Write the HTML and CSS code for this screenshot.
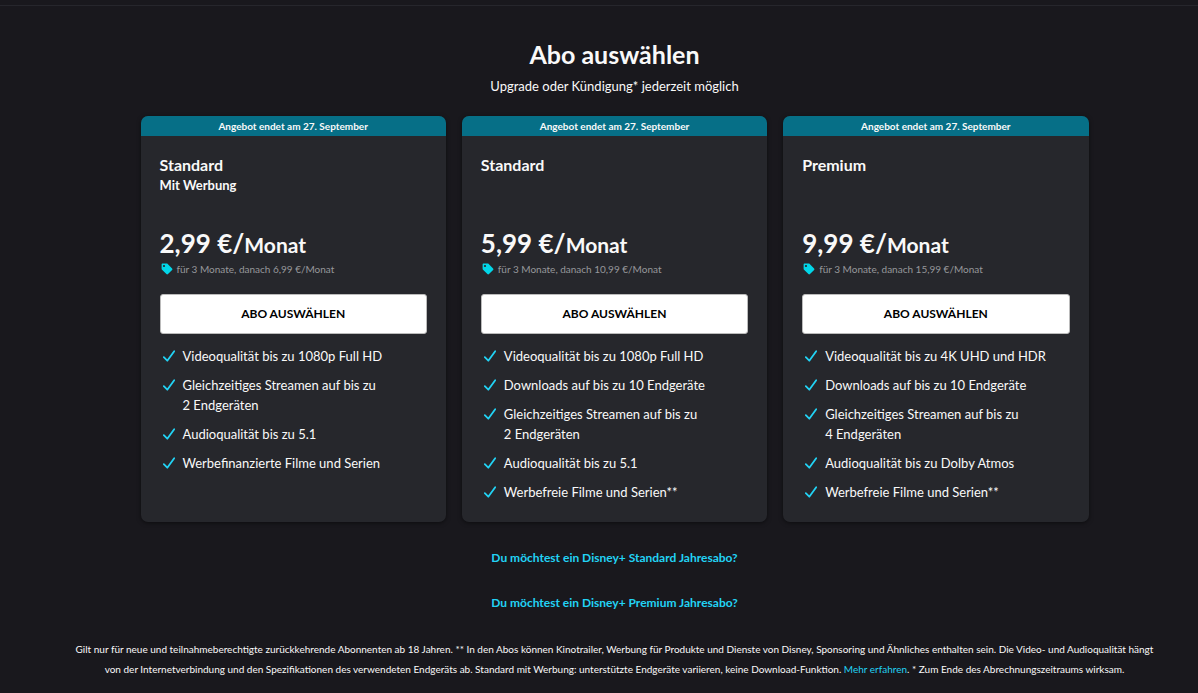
FILE: index.html
```html
<!DOCTYPE html>
<html lang="de">
<head>
    <meta charset="UTF-8">
    <meta name="viewport" content="width=device-width, initial-scale=1.0">
    <title>Abo auswählen</title>
    <link rel="stylesheet" href="styles.css">
</head>
<body>
    <svg class="sprite" aria-hidden="true">
        <symbol id="check" viewBox="0 0 12 12">
            <path d="M0.8 7.2 L4.3 10.7 L11.2 1.2" fill="none" stroke="currentColor" stroke-width="1.8" stroke-linecap="round" stroke-linejoin="round"/>
        </symbol>
        <symbol id="tag" viewBox="0 0 12 12">
            <path fill="currentColor" fill-rule="evenodd" d="M1.4 0.5h4.3c.4 0 .7.1 1 .4l4.4 4.5c.5.5.5 1.1 0 1.6L7 11.1c-.5.5-1.1.5-1.6 0L1 6.7c-.3-.3-.4-.6-.4-1V1.4c0-.5.4-.9.8-.9zM3 1.9a1.1 1.1 0 1 0 0 2.2 1.1 1.1 0 0 0 0-2.2z"/>
        </symbol>
    </svg>

    <main>
        <header>
            <h1>Abo auswählen</h1>
            <p>Upgrade oder Kündigung* jederzeit möglich</p>
        </header>

        <section class="plans">
            <article class="plan">
                <p class="banner">Angebot endet am 27. September</p>
                <div class="plan-body">
                    <div class="plan-name">
                        <h2>Standard</h2>
                        <h3>Mit Werbung</h3>
                    </div>
                    <p class="price">2,99 €/<span>Monat</span></p>
                    <p class="note"><svg class="tag"><use href="#tag"/></svg>für 3 Monate, danach 6,99 €/Monat</p>
                    <button type="button">ABO AUSWÄHLEN</button>
                    <ul>
                        <li><svg class="check"><use href="#check"/></svg>Videoqualität bis zu 1080p Full HD</li>
                        <li><svg class="check"><use href="#check"/></svg>Gleichzeitiges Streamen auf bis zu<br>2 Endgeräten</li>
                        <li><svg class="check"><use href="#check"/></svg>Audioqualität bis zu 5.1</li>
                        <li><svg class="check"><use href="#check"/></svg>Werbefinanzierte Filme und Serien</li>
                    </ul>
                </div>
            </article>

            <article class="plan">
                <p class="banner">Angebot endet am 27. September</p>
                <div class="plan-body">
                    <div class="plan-name">
                        <h2>Standard</h2>
                    </div>
                    <p class="price">5,99 €/<span>Monat</span></p>
                    <p class="note"><svg class="tag"><use href="#tag"/></svg>für 3 Monate, danach 10,99 €/Monat</p>
                    <button type="button">ABO AUSWÄHLEN</button>
                    <ul>
                        <li><svg class="check"><use href="#check"/></svg>Videoqualität bis zu 1080p Full HD</li>
                        <li><svg class="check"><use href="#check"/></svg>Downloads auf bis zu 10 Endgeräte</li>
                        <li><svg class="check"><use href="#check"/></svg>Gleichzeitiges Streamen auf bis zu<br>2 Endgeräten</li>
                        <li><svg class="check"><use href="#check"/></svg>Audioqualität bis zu 5.1</li>
                        <li><svg class="check"><use href="#check"/></svg>Werbefreie Filme und Serien**</li>
                    </ul>
                </div>
            </article>

            <article class="plan">
                <p class="banner">Angebot endet am 27. September</p>
                <div class="plan-body">
                    <div class="plan-name">
                        <h2>Premium</h2>
                    </div>
                    <p class="price">9,99 €/<span>Monat</span></p>
                    <p class="note"><svg class="tag"><use href="#tag"/></svg>für 3 Monate, danach 15,99 €/Monat</p>
                    <button type="button">ABO AUSWÄHLEN</button>
                    <ul>
                        <li><svg class="check"><use href="#check"/></svg>Videoqualität bis zu 4K UHD und HDR</li>
                        <li><svg class="check"><use href="#check"/></svg>Downloads auf bis zu 10 Endgeräte</li>
                        <li><svg class="check"><use href="#check"/></svg>Gleichzeitiges Streamen auf bis zu<br>4 Endgeräten</li>
                        <li><svg class="check"><use href="#check"/></svg>Audioqualität bis zu Dolby Atmos</li>
                        <li><svg class="check"><use href="#check"/></svg>Werbefreie Filme und Serien**</li>
                    </ul>
                </div>
            </article>
        </section>

        <nav class="yearly">
            <a href="#">Du möchtest ein Disney+ Standard Jahresabo?</a>
            <a href="#">Du möchtest ein Disney+ Premium Jahresabo?</a>
        </nav>

        <footer>
            <p>Gilt nur für neue und teilnahmeberechtigte zurückkehrende Abonnenten ab 18 Jahren. ** In den Abos können Kinotrailer, Werbung für Produkte und Dienste von Disney, Sponsoring und Ähnliches enthalten sein. Die Video- und Audioqualität hängt<br>von der Internetverbindung und den Spezifikationen des verwendeten Endgeräts ab. Standard mit Werbung: unterstützte Endgeräte variieren, keine Download-Funktion. <a href="#">Mehr erfahren</a>. * Zum Ende des Abrechnungszeitraums wirksam.</p>
        </footer>
    </main>
</body>
</html>
```

FILE: styles.css
```css
* {
    box-sizing: border-box;
}

body {
    margin: 0;
    padding-top: 5px;
    background-color: #19181d;
    color: #f9f9f9;
    font-family: Lato, "Open Sans", sans-serif;
    font-size: 13px;
    line-height: 20px;
}

h1, h2, h3, p, ul {
    margin: 0;
    padding: 0;
}

a {
    color: #22d3f5;
    text-decoration: none;
}

a:hover {
    text-decoration: underline;
}

.sprite {
    display: none;
}

main {
    border-top: 1px solid #26262c;
    padding: 32px 0 14px 31px;
}

header {
    text-align: center;
    margin-bottom: 20px;
}

h1 {
    font-size: 25px;
    line-height: 32px;
    margin-bottom: 6px;
}

.plans {
    display: grid;
    grid-template-columns: repeat(3, 1fr);
    gap: 16px;
    max-width: 948px;
    margin: 0 auto;
}

.plan {
    background-color: #26272c;
    border-radius: 7px;
    overflow: hidden;
    box-shadow: 0 1px 4px rgba(0, 0, 0, 0.5);
}

.banner {
    background-color: #066f87;
    font-size: 10px;
    font-weight: bold;
    line-height: 20px;
    text-align: center;
}

.plan-body {
    padding: 19px 19px 20px;
}

.plan-name {
    min-height: 72px;
}

h2 {
    font-size: 16px;
    line-height: 20px;
}

h3 {
    font-size: 13px;
    line-height: 20px;
}

.price {
    font-size: 26px;
    font-weight: bold;
    line-height: 32px;
}

.price span {
    font-size: 21px;
}

.note {
    display: flex;
    align-items: center;
    gap: 4px;
    color: #96979b;
    font-size: 10px;
    line-height: 16px;
}

.tag {
    width: 12px;
    height: 12px;
    margin-left: 1px;
    color: #02d6e8;
}

button {
    display: block;
    width: 100%;
    height: 40px;
    margin: 17px 0 12px;
    padding: 0 0 2px;
    border: 1px solid #bbb;
    border-radius: 3px;
    background-color: #fff;
    color: #000;
    font-family: inherit;
    font-size: 12px;
    font-weight: bold;
    cursor: pointer;
}

button:hover {
    background-color: #e6e6e6;
}

ul {
    display: flex;
    flex-direction: column;
    gap: 9px;
    list-style: none;
}

li {
    display: flex;
    gap: 8px;
    padding-left: 3px;
}

.check {
    flex: none;
    width: 12px;
    height: 12px;
    margin-top: 4px;
    color: #22d3f5;
}

.yearly {
    display: flex;
    flex-direction: column;
    align-items: center;
    gap: 25px;
    margin: 26px 0;
    font-size: 12px;
    font-weight: bold;
}

footer {
    font-size: 10px;
    text-align: center;
}
```
